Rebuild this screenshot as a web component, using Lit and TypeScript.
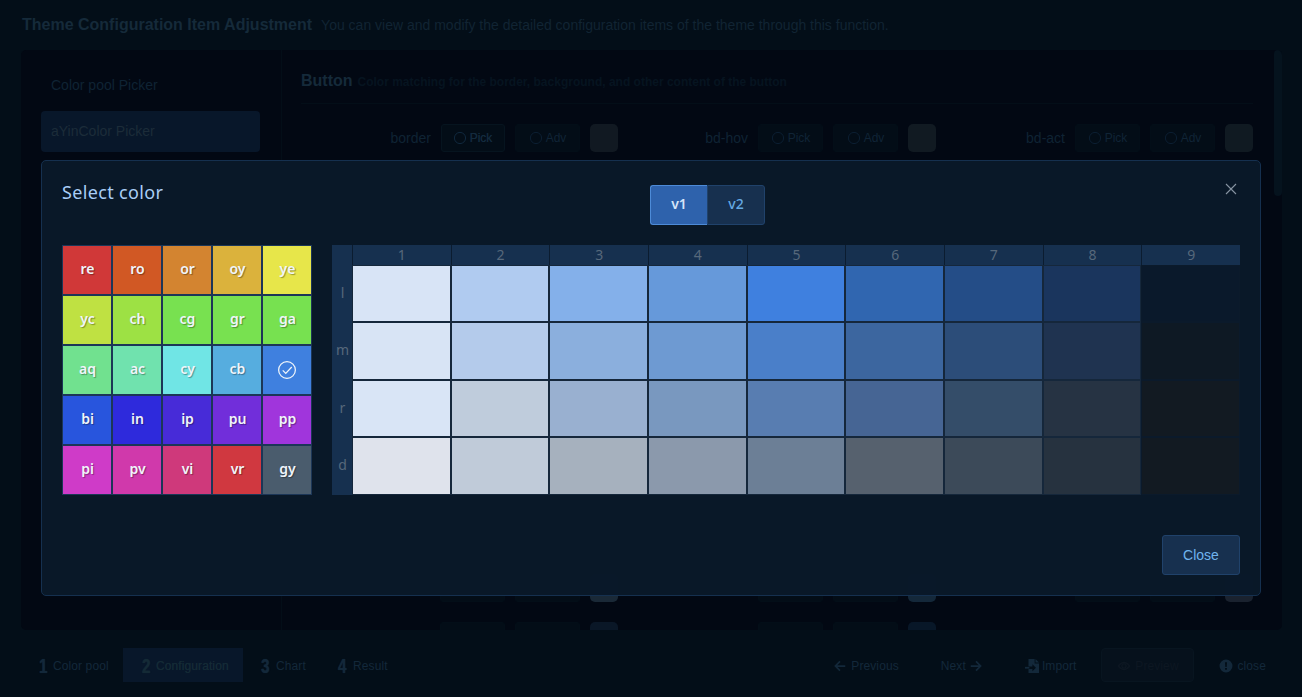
import { LitElement, html, css, svg } from "lit";
import { customElement, property } from "lit/decorators.js";

interface Swatch { name: string; color: string; selected?: boolean }

const POOL: Swatch[] = [
  { name: "re", color: "#d03838" }, { name: "ro", color: "#d15824" }, { name: "or", color: "#d38430" }, { name: "oy", color: "#dbb23c" }, { name: "ye", color: "#e7e64a" },
  { name: "yc", color: "#bfe142" }, { name: "ch", color: "#9de144" }, { name: "cg", color: "#78e150" }, { name: "gr", color: "#78e150" }, { name: "ga", color: "#77e150" },
  { name: "aq", color: "#71e18f" }, { name: "ac", color: "#70e2ae" }, { name: "cy", color: "#70e5e5" }, { name: "cb", color: "#56addf" }, { name: "bl", color: "#3f80df", selected: true },
  { name: "bi", color: "#2855dd" }, { name: "in", color: "#2e2adc" }, { name: "ip", color: "#472bd8" }, { name: "pu", color: "#712eda" }, { name: "pp", color: "#a035dc" },
  { name: "pi", color: "#cf3bc8" }, { name: "pv", color: "#d039ab" }, { name: "vi", color: "#cf397b" }, { name: "vr", color: "#d03840" }, { name: "gy", color: "#4a5c6d" },
];

const SHADES: { key: string; colors: string[] }[] = [
  { key: "l", colors: ["#d8e4f6", "#b0cbf0", "#84b0ea", "#6699da", "#3f80df", "#3066b0", "#244d87", "#1a355d", "#0a192b"] },
  { key: "m", colors: ["#d8e4f5", "#b4cbeb", "#8bafdd", "#6e9ad2", "#4a7fc9", "#3c669f", "#2c4d79", "#1f3350", "#0e1924"] },
  { key: "r", colors: ["#d9e5f6", "#bfccdc", "#99b0d0", "#7998bf", "#587db1", "#466594", "#344d69", "#263343", "#121a22"] },
  { key: "d", colors: ["#dfe3ec", "#c0cbd9", "#a6b1be", "#8b99ac", "#6c7f96", "#56616e", "#3c4a59", "#26323f", "#121a22"] },
];

const ring = svg`<circle cx="8" cy="8" r="5.6" fill="none" stroke="currentColor" stroke-width="1"/>`;

const ICONS: Record<string, unknown> = {
  ring,
  left: svg`<path d="M14 8H3M8 2.8 2.8 8 8 13.2" fill="none" stroke="currentColor" stroke-width="2"/>`,
  right: svg`<path d="M2 8h11M8 2.8 13.2 8 8 13.2" fill="none" stroke="currentColor" stroke-width="2"/>`,
  import: svg`<path fill-rule="evenodd" d="M4 0h7v5h5v11H4v-4.5h4.5V14L12.5 10 8.5 6v2.5H4z" fill="currentColor"/><path d="M12 0l4 4h-4z" fill="currentColor"/><path d="M0 10h5" stroke="currentColor" stroke-width="2"/>`,
  eye: svg`<path d="M1.5 8Q8 0 14.5 8 8 16 1.5 8z" fill="none" stroke="currentColor" stroke-width="1.5"/><circle cx="8" cy="8" r="2.4" fill="none" stroke="currentColor" stroke-width="1.4"/>`,
  info: svg`<path fill-rule="evenodd" d="M8 .6a7.4 7.4 0 1 0 0 14.8A7.4 7.4 0 0 0 8 .6zM6.8 3.6h2.4L8.8 9H7.2zM6.9 10.3h2.2v2.1H6.9z" fill="currentColor"/>`,
  check: svg`<circle cx="8" cy="8" r="6.7" fill="none" stroke="currentColor"/><path d="M4.6 8.3 7 10.7 11.8 5.6" fill="none" stroke="currentColor"/>`,
  cross: svg`<path d="M3 3l10 10M13 3 3 13" fill="none" stroke="currentColor" stroke-width="1.1"/>`,
};

const icon = (name: string) => html`<svg class="icon" viewBox="0 0 16 16">${ICONS[name]}</svg>`;

@customElement("config-row")
class ConfigRow extends LitElement {
  @property({ attribute: false }) labels: string[] = [];
  @property({ attribute: false }) colors: string[] = [];
  @property({ type: Boolean }) outlined = false;
  @property({ type: Boolean }) blank = false;

  static styles = css`
    :host { display: grid; grid-template-columns: 317px 318px 317px; height: 28px; margin-bottom: 20px; }
    .item { display: flex; justify-content: flex-end; align-items: center; color: #0f2333; font-size: 14px; }
    .label { margin-right: 10px; }
    .btn { box-sizing: border-box; width: 65px; height: 28px; margin-right: 10px; border-radius: 3px; border: 1px solid #030e18; background: #030d17; display: flex; align-items: center; justify-content: center; gap: 2px; font-size: 12px; color: #102436; padding-right: 1px; }
    .item .btn.outlined { border-color: #06141f; color: #132a3d; width: 64px; text-shadow: 0 0 .6px #132a3d; padding: 0 2px 1px 0; }
    .icon { width: 16px; height: 16px; color: #0b1e31; }
    .outlined .icon { color: #10283d; }
    .chip { width: 28px; height: 28px; border-radius: 5px; }
  `;

  render() {
    return this.labels.map((label, i) => html`
      <div class="item">
        <span class="label">${label}</span>
        <span class="btn ${this.outlined && i === 0 ? "outlined" : ""}">${this.blank ? "" : html`${icon("ring")}Pick`}</span>
        <span class="btn">${this.blank ? "" : html`${icon("ring")}Adv`}</span>
        <span class="chip" style="background:${this.colors[i]}"></span>
      </div>`);
  }
}

@customElement("color-dialog")
class ColorDialog extends LitElement {
  static styles = css`
    :host { display: flex; flex-direction: column; box-sizing: border-box; width: 1220px; height: 436px; padding: 0 20px; border: 1px solid #15304f; border-radius: 5px; background: rgba(9, 24, 41, .98); font-family: "Noto Sans", "Open Sans", sans-serif; }
    .head { display: grid; grid-template-columns: 588px 115px 1fr; height: 84px; }
    .title { padding-top: 19px; font-size: 18px; line-height: 24px; letter-spacing: .35px; color: #a9cdf6; }
    .tabs { display: flex; height: 40px; margin-top: 24px; box-sizing: border-box; }
    .tab { box-sizing: border-box; width: 58px; border: 1px solid #20426b; background: #17304f; color: #64a9e4; border-radius: 0 3px 3px 0; display: flex; align-items: center; justify-content: center; font-size: 14px; font-weight: 500; padding-bottom: 3px; }
    .tab.active { width: 57px; background: #2e62ac; border-color: #4d8bd8; border-right: 0; color: #d5e5f9; font-weight: 600; border-radius: 3px 0 0 3px; }
    .x { justify-self: end; margin: 20px 1px 0 0; color: #8794a2; }
    .x .icon, .pool .icon { display: block; }
    .x .icon { width: 16px; height: 16px; }
    .body { display: flex; gap: 20px; height: 250px; }
    .pool { display: grid; grid-template-columns: repeat(5, 50px); grid-auto-rows: 50px; }
    .swatch { box-sizing: border-box; border: 1px solid #1c3657; display: flex; align-items: center; justify-content: center; color: #f0f5fb; font-size: 14px; font-weight: 600; padding: 0 0 4px 1px; text-shadow: 1px 1px 1px rgba(0, 0, 0, .35); }
    .swatch.selected { padding: 0; }
    .swatch .icon { width: 20px; height: 20px; }
    .shades { flex: 1; display: grid; grid-template-columns: 20px repeat(9, 1fr); grid-template-rows: 20px 57px 58px 57px 58px; }
    .th { background: #16304f; color: #56687b; font-size: 14px; display: flex; align-items: center; justify-content: center; box-sizing: border-box; padding: 0 0 3px 1px; }
    .th.col { border-left: 1px solid #0b1c30; padding: 0 0 2px 0; }
    .cell { border: 1px solid #15273b; box-sizing: border-box; }
    .cell.last { border-color: #0b1a2b; }
    .foot { display: flex; justify-content: flex-end; margin-top: 40px; }
    .close { box-sizing: border-box; width: 78px; height: 40px; border: 1px solid #20426b; border-radius: 3px; background: #17304f; color: #70b4ee; display: flex; align-items: center; justify-content: center; font: 14px "Liberation Sans", Arial, sans-serif; }
  `;

  render() {
    return html`
      <div class="head">
        <div class="title">Select color</div>
        <div class="tabs"><span class="tab active">v1</span><span class="tab">v2</span></div>
        <div class="x">${icon("cross")}</div>
      </div>
      <div class="body">
        <div class="pool">
          ${POOL.map((s) => html`<div class="swatch ${s.selected ? "selected" : ""}" style="background:${s.color}">${s.selected ? icon("check") : s.name}</div>`)}
        </div>
        <div class="shades">
          <div class="th"></div>
          ${[1, 2, 3, 4, 5, 6, 7, 8, 9].map((n) => html`<div class="th col">${n}</div>`)}
          ${SHADES.map((r) => html`<div class="th">${r.key}</div>${r.colors.map((c, i) => html`<div class="cell ${i === 8 ? "last" : ""}" style="background:${c}"></div>`)}`)}
        </div>
      </div>
      <div class="foot"><span class="close">Close</span></div>`;
  }
}

@customElement("app-root")
class AppRoot extends LitElement {
  static styles = css`
    :host { display: block; position: relative; width: 1302px; height: 697px; overflow: hidden; background: #030e18; font-family: "Liberation Sans", Arial, sans-serif; color: #102434; }
    .page { display: flex; flex-direction: column; height: 697px; padding: 0 20px 0 21px; box-sizing: border-box; }
    .header { display: flex; align-items: baseline; gap: 9px; height: 50px; padding: 16px 0 0 1px; box-sizing: border-box; white-space: nowrap; }
    .heading { font-size: 16px; font-weight: bold; color: #152a3a; }
    .desc { font-size: 14px; color: #112433; }
    .panel { display: flex; height: 580px; background: #020813; border-radius: 5px; overflow: hidden; }
    .side { box-sizing: border-box; width: 261px; flex: none; border-right: 1px solid #030e18; padding: 15px 21px 15px 20px; font-size: 14px; }
    .nav { height: 41px; line-height: 41px; padding-left: 10px; margin-bottom: 5px; border-radius: 4px; color: #0f2334; }
    .nav.active { background: #08172a; color: #1c2c39; }
    .main { flex: 1; padding: 0 0 0 19px; overflow: hidden; }
    .section { display: flex; align-items: baseline; gap: 5px; height: 54px; box-sizing: border-box; padding-top: 22px; width: 952px; border-bottom: 1px solid #030e18; margin-bottom: 20px; font-weight: bold; }
    .section .name { font-size: 16px; color: #152a3a; }
    .section .note { font-size: 12px; color: #061420; }
    .space { height: 18px; }
    .thumb { width: 8px; height: 146px; background: #05131e; border-radius: 4px; }
    .footer { display: flex; align-items: center; height: 34px; margin-top: 18px; font-size: 12px; letter-spacing: .1px; color: #13283a; }
    .step { display: flex; align-items: center; gap: 6px; box-sizing: border-box; height: 34px; padding-top: 1px; }
    .step b { font-size: 20px; line-height: 20px; display: inline-block; width: 8px; transform: scaleX(.76); transform-origin: left; text-shadow: 0 0 1px currentColor; }
    .s1 { width: 102px; padding-left: 18px; }
    .s2 { width: 120px; padding-left: 19px; background: #08172a; color: #142a36; text-shadow: 0 0 .6px #142a36; }
    .s3 { width: 78px; padding-left: 18px; gap: 7px; }
    .s4 { width: 90px; padding-left: 17px; gap: 7px; }
    .actions { display: flex; flex: 1; align-items: center; justify-content: flex-end; padding-right: 16px; }
    .act { display: flex; align-items: center; gap: 4px; box-sizing: border-box; height: 34px; padding-top: 1px; }
    .icon { width: 14px; height: 14px; }
    .prev { margin-right: 42px; }
    .next { margin-right: 42px; gap: 3px; }
    .imp { margin-right: 25px; gap: 3px; }
    .preview { width: 93px; justify-content: center; margin-right: 25px; color: #0d1722; background: #06111c; border: 1px solid #081520; border-radius: 4px; }
    .dialog { position: absolute; left: 41px; top: 160px; }
  `;

  render() {
    const dark = ["#111922", "#111a22", "#101a22"];
    return html`
      <div class="page">
        <div class="header">
          <span class="heading">Theme Configuration Item Adjustment</span>
          <span class="desc">You can view and modify the detailed configuration items of the theme through this function.</span>
        </div>
        <div class="panel">
          <div class="side">
            <div class="nav">Color pool Picker</div>
            <div class="nav active">aYinColor Picker</div>
          </div>
          <div class="main">
            <div class="section"><span class="name">Button</span><span class="note">Color matching for the border, background, and other content of the button</span></div>
            <config-row outlined .labels=${["border", "bd-hov", "bd-act"]} .colors=${dark}></config-row>
            ${[0, 1, 2, 3, 4, 5, 6, 7].map(() => html`<config-row blank .labels=${["", "", ""]} .colors=${["#030d17", "#030d17", "#030d17"]}></config-row>`)}
            <div class="space"></div>
            <config-row blank .labels=${["", "", ""]} .colors=${["#1a2937", "#14283a", "#1a222f"]}></config-row>
            <config-row blank .labels=${["", ""]} .colors=${["#0a1727", "#081728"]}></config-row>
          </div>
          <div class="thumb"></div>
        </div>
        <div class="footer">
          <span class="step s1"><b>1</b>Color pool</span>
          <span class="step s2"><b>2</b>Configuration</span>
          <span class="step s3"><b>3</b>Chart</span>
          <span class="step s4"><b>4</b>Result</span>
          <div class="actions">
            <span class="act prev">${icon("left")}Previous</span>
            <span class="act next">Next${icon("right")}</span>
            <span class="act imp">${icon("import")}Import</span>
            <span class="act preview">${icon("eye")}Preview</span>
            <span class="act">${icon("info")}close</span>
          </div>
        </div>
      </div>
      <color-dialog class="dialog"></color-dialog>`;
  }
}
